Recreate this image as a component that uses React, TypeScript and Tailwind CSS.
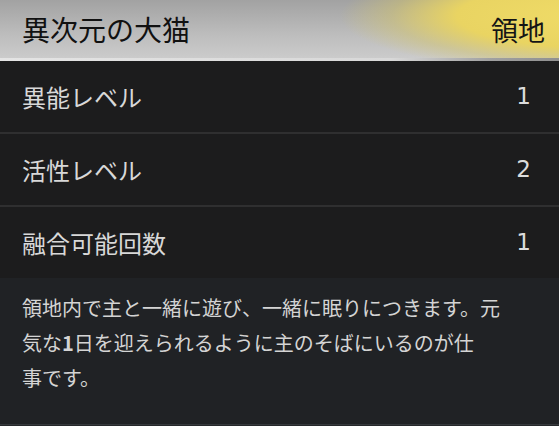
const rows = [
  { label: '異能レベル', value: '1' },
  { label: '活性レベル', value: '2' },
  { label: '融合可能回数', value: '1' },
];

const font = "font-['Noto_Sans_CJK_JP','Noto_Sans',sans-serif]";

function StatRow({ label, value }: { label: string; value: string }) {
  return (
    <div className="flex h-[71px] items-center justify-between pl-[22px] pr-[28px]">
      <span className="text-[24px] text-[#d8d8d8]">{label}</span>
      <span className="font-['DejaVu_Sans',sans-serif] text-[23px] text-[#dcdcdc]">{value}</span>
    </div>
  );
}

export default function App() {
  return (
    <div className={`h-[426px] w-[559px] overflow-hidden bg-[#1c1c1d] ${font}`}>
      <div className="flex h-[58px] items-center justify-between bg-[radial-gradient(260px_58px_at_600px_16px,#f0dc68_0%,#e9d462_55%,rgba(214,198,100,0.45)_80%,transparent_100%),linear-gradient(to_bottom,#a2a2a2,#bdbdbd_60%,#cbcbcb)] pl-[22px] pr-[14px]">
        <h1 className="text-[28px] leading-none text-[#111]">異次元の大猫</h1>
        <span className="text-[27px] leading-none text-[#151515]">領地</span>
      </div>
      <div className="h-[3px] bg-[linear-gradient(to_right,#e4e4e4,#d8d8d8_70%,#a0a0a0_88%,#909090)]" />

      <div className="flex flex-col">
        <StatRow {...rows[0]} />
        <div className="h-[2px] bg-[#2f2f30]" />
        <StatRow {...rows[1]} />
        <div className="h-[2px] bg-[#2f2f30]" />
        <StatRow {...rows[2]} />
      </div>

      <div className="h-[147px] border-b border-[#35383c] bg-[#202225] pl-[22px] pr-[14px] pt-[12px]">
        <p className="text-[20px] leading-[35px] text-[#d4d4d4]">
          領地内で主と一緒に遊び、一緒に眠りにつきます。元
          <br />
          気な<span className="font-bold">1</span>日を迎えられるように主のそばにいるのが仕
          <br />
          事です。
        </p>
      </div>
      <div className="h-[3px] bg-[#26282b]" />
    </div>
  );
}
